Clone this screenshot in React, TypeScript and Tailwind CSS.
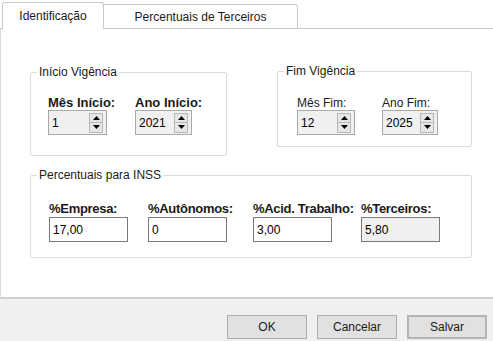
import React from 'react';

const font = { fontFamily: '"Liberation Sans", Arial, sans-serif' };

function GroupBox({
  title,
  className,
  children,
}: {
  title: string;
  className: string;
  children: React.ReactNode;
}) {
  return (
    <div className={`relative border border-[#dcdcdc] rounded-[2px] ${className}`}>
      <span className="absolute left-[6px] top-[-8px] bg-white px-[2px] text-[12px] leading-[14px] text-[#1a1a1a]">
        {title}
      </span>
      {children}
    </div>
  );
}

function Spinner({ value, width }: { value: string; width: string }) {
  return (
    <div className={`h-[25px] ${width} border border-[#a9a9a9] bg-[#f0f0f0] flex items-center justify-between pr-[3px]`}>
      <span className="pl-[3px] text-[12px] leading-none text-black">{value}</span>
      <div className="flex flex-col w-[14px] h-[20px] border border-[#b8b8b8] bg-[#e6e6e6]">
        <div className="flex-1 flex items-center justify-center border-b border-[#b8b8b8]">
          <svg width="7" height="4" viewBox="0 0 7 4">
            <path d="M0 4 L3.5 0 L7 4 Z" fill="#000" />
          </svg>
        </div>
        <div className="flex-1 flex items-center justify-center">
          <svg width="7" height="4" viewBox="0 0 7 4">
            <path d="M0 0 L3.5 4 L7 0 Z" fill="#000" />
          </svg>
        </div>
      </div>
    </div>
  );
}

function Field({ label, value, col, grey }: { label: string; value: string; col: string; grey?: boolean }) {
  return (
    <div className={`${col} flex flex-col`}>
      <span className="text-[13px] leading-[16px] font-bold text-[#1a1a1a] whitespace-nowrap tracking-[-0.3px]">{label}</span>
      <div
        className={`h-[25px] w-[79px] border border-[#7a7a7a] flex items-center pl-[3px] text-[12px] text-black ${
          grey ? 'bg-[#f0f0f0]' : 'bg-white'
        }`}
      >
        {value}
      </div>
    </div>
  );
}

export default function App() {
  return (
    <div className="w-[493px] h-[341px] overflow-hidden flex flex-col bg-[#f0f0f0] text-black" style={font}>
      <div className="h-[299px] bg-white flex flex-col">
        {/* Tabs */}
        <div className="h-[28px] flex items-end pl-[2px] relative z-10">
          <div className="w-[102px] h-[27px] mb-[-1px] bg-white border border-b-0 border-[#c9c9c9] rounded-t-[3px] flex items-center justify-center text-[12px] text-[#1a1a1a]">
            Identificação
          </div>
          <div className="w-[194px] h-[24px] bg-white border border-l-0 border-b-0 border-[#c9c9c9] rounded-tr-[3px] flex items-center justify-center text-[12px] text-[#1a1a1a]">
            Percentuais de Terceiros
          </div>
        </div>

        {/* Tab page */}
        <div className="flex-1 w-[520px] border-l border-t border-b-2 border-l-[#dcdcdc] border-t-[#c9c9c9] border-b-[#cfcfcf]">
          <div className="flex items-start mt-[43px] ml-[29px]">
            <GroupBox title="Início Vigência" className="w-[197px] h-[84px] pt-[22px] pl-[17px]">
              <div className="flex">
                <div className="w-[87px] flex flex-col">
                  <span className="text-[13px] leading-[15px] font-bold text-[#1a1a1a] whitespace-nowrap">Mês Início:</span>
                  <Spinner value="1" width="w-[59px]" />
                </div>
                <div className="flex flex-col">
                  <span className="text-[13px] leading-[15px] font-bold text-[#1a1a1a] whitespace-nowrap">Ano Início:</span>
                  <Spinner value="2021" width="w-[57px]" />
                </div>
              </div>
            </GroupBox>
            <GroupBox title="Fim Vigência" className="ml-[50px] mt-[-1px] w-[195px] h-[76px] pt-[24px] pl-[19px]">
              <div className="flex">
                <div className="w-[85px] flex flex-col">
                  <span className="text-[12px] leading-[14px] text-[#1a1a1a]">Mês Fim:</span>
                  <Spinner value="12" width="w-[58px]" />
                </div>
                <div className="flex flex-col">
                  <span className="text-[12px] leading-[14px] text-[#1a1a1a]">Ano Fim:</span>
                  <Spinner value="2025" width="w-[56px]" />
                </div>
              </div>
            </GroupBox>
          </div>

          <GroupBox title="Percentuais para INSS" className="mt-[19px] ml-[29px] w-[442px] h-[83px] pt-[25px] pl-[18px]">
            <div className="flex">
              <Field label="%Empresa:" value="17,00" col="w-[99px]" />
              <Field label="%Autônomos:" value="0" col="w-[105px]" />
              <Field label="%Acid. Trabalho:" value="3,00" col="w-[108px]" />
              <Field label="%Terceiros:" value="5,80" col="w-[79px]" grey />
            </div>
          </GroupBox>
        </div>
      </div>

      {/* Buttons */}
      <div className="flex-1 flex justify-end items-start pt-[16px] pr-[6px] gap-[10px]">
        <button className="w-[80px] h-[24px] border border-[#adadad] bg-[#e1e1e1] text-[12px] text-[#1a1a1a]">OK</button>
        <button className="w-[80px] h-[24px] border border-[#adadad] bg-[#e1e1e1] text-[12px] text-[#1a1a1a]">Cancelar</button>
        <button className="w-[80px] h-[24px] border-2 border-[#b4b4b4] bg-[#e1e1e1] text-[12px] text-[#1a1a1a]">Salvar</button>
      </div>
    </div>
  );
}
